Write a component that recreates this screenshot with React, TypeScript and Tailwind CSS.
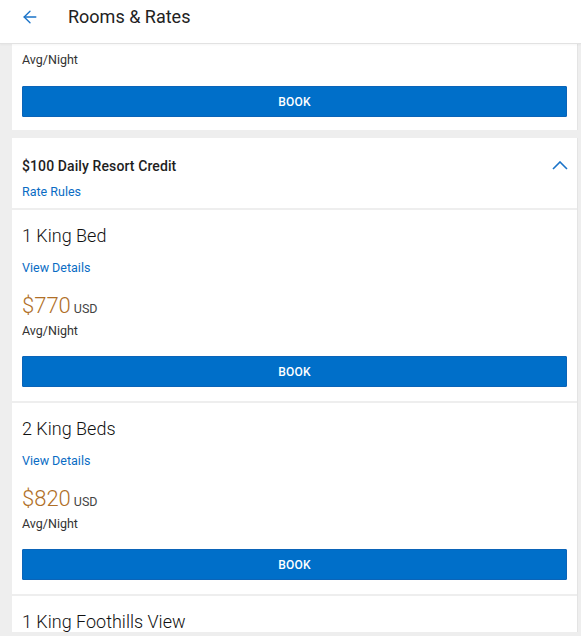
import { ArrowLeft } from 'lucide-react';

const rooms = [
    { name: '1 King Bed', price: 770 },
    { name: '2 King Beds', price: 820 },
    { name: '1 King Foothills View', price: null },
];

function BookButton({ className = 'mt-[18px]' }: { className?: string }) {
    return (
        <button className={`${className} flex h-[31px] w-full items-center justify-center rounded-[1px] border border-[#0b64b8] bg-[#006fc9] text-[12px] font-medium tracking-[0.2px] text-white`}>
            BOOK
        </button>
    );
}

function Price({ amount }: { amount: number }) {
    return (
        <>
            <div className="h-[28px] leading-[28px]">
                <span className="text-[22px] font-light text-[#b06f27]">${amount}</span>
                <span className="ml-[3px] text-[12.5px] leading-none text-[#444]">USD</span>
            </div>
            <p className="mt-[3px] text-[12.5px] leading-[16px] text-[#333]">Avg/Night</p>
        </>
    );
}

export default function App() {
    return (
        <div className="h-[636px] overflow-hidden bg-[#eeeeee] font-['Roboto',sans-serif] text-[#212121]">
            {/* Header */}
            <div className="relative z-10 flex h-[44px] items-start border-b border-[#e2e2e2] bg-white pt-[5px] shadow-[0_1px_2px_rgba(0,0,0,0.04)]">
                <div className="flex h-[24px] w-[68px] items-center pl-[20px]">
                    <ArrowLeft size={20} strokeWidth={1.6} className="text-[#1a73c8]" />
                </div>
                <h1 className="text-[18px] leading-[24px] text-[#222]">Rooms &amp; Rates</h1>
            </div>

            <div className="h-[588px] overflow-hidden pl-[12px] pr-[4px]">
                {/* Previous rate, scrolled under the header */}
                <div className="-mt-px overflow-hidden bg-white px-[10px] pb-[13px] shadow-[1px_0_0_#e4e4e4]">
                    <div className="-mt-[22px]">
                        <Price amount={730} />
                        <BookButton />
                    </div>
                </div>

                {/* Rate group */}
                <div className="mt-[8px] flex flex-col gap-[2px] shadow-[1px_0_0_#e4e4e4]">
                    <div className="flex items-start justify-between bg-white px-[10px] pb-[8px] pt-[18px]">
                        <div>
                            <h2 className="text-[14px] font-medium leading-[20px] tracking-[0.1px] text-[#1e1e1e]">
                                $100 Daily Resort Credit
                            </h2>
                            <a className="mt-[8px] block text-[12.5px] leading-[16px] text-[#0a6cc4]">Rate Rules</a>
                        </div>
                        <svg width="16" height="9" viewBox="0 0 16 9" className="-mr-[1px] mt-[5px]">
                            <polyline points="1,8 8,1 15,8" fill="none" stroke="#1a73c8" strokeWidth="1.6" />
                        </svg>
                    </div>

                    {rooms.map((room) => (
                        <div key={room.name} className="bg-white px-[10px] pb-[14px] pt-[14px]">
                            <h3 className="text-[18px] font-light leading-[24px] text-[#111]">{room.name}</h3>
                            {room.price !== null && (
                                <>
                                    <a className="mt-[12px] block text-[12.5px] leading-[16px] text-[#0a6cc4]">View Details</a>
                                    <div className="mt-[16px]">
                                        <Price amount={room.price} />
                                    </div>
                                    <BookButton className="mt-[17px]" />
                                </>
                            )}
                        </div>
                    ))}
                </div>
            </div>
        </div>
    );
}
